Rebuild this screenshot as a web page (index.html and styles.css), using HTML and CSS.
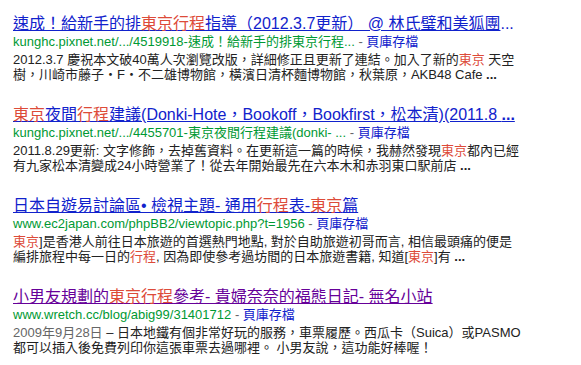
FILE: index.html
```html
<!DOCTYPE html>
<html lang="zh-Hant">

<head>
    <meta charset="UTF-8">
    <title>東京行程 - 搜尋結果</title>
    <link rel="stylesheet" href="styles.css">
</head>

<body>
    <ol class="results">
        <li class="result">
            <h3 class="title"><a href="#">速成！給新手的排<em>東京行程</em>指導（2012.3.7更新） @ 林氏璧和美狐團</a>...</h3>
            <div class="url">
                <cite>kunghc.pixnet.net/.../4519918-速成！給新手的排東京行程...</cite>
                <span class="sep">-</span> <a href="#" class="cache">頁庫存檔</a>
            </div>
            <p class="snippet">2012.3.7 慶祝本文破40萬人次瀏覽改版，詳細修正且更新了連結。加入了新的<em>東京</em> 天空<br>樹，川崎市藤子・F・不二雄博物館，橫濱日清杯麵博物館，秋葉原，AKB48 Cafe <b>...</b></p>
        </li>
        <li class="result">
            <h3 class="title"><a href="#"><em>東京</em>夜間<em>行程</em>建議(Donki-Hote，Bookoff，Bookfirst，松本清)(2011.8 <b>...</b></a></h3>
            <div class="url">
                <cite>kunghc.pixnet.net/.../4455701-東京夜間行程建議(donki- ...</cite>
                <span class="sep">-</span> <a href="#" class="cache">頁庫存檔</a>
            </div>
            <p class="snippet">2011.8.29更新: 文字修飾，去掉舊資料。在更新這一篇的時候，我赫然發現<em>東京</em>都內已經<br>有九家松本清變成24小時營業了！從去年開始最先在六本木和赤羽東口駅前店 <b>...</b></p>
        </li>
        <li class="result">
            <h3 class="title"><a href="#">日本自遊易討論區• 檢視主題- 通用<em>行程</em>表-<em>東京</em>篇</a></h3>
            <div class="url">
                <cite>www.ec2japan.com/phpBB2/viewtopic.php?t=1956</cite>
                <span class="sep">-</span> <a href="#" class="cache">頁庫存檔</a>
            </div>
            <p class="snippet"><em>東京</em>]是香港人前往日本旅遊的首選熱門地點, 對於自助旅遊初哥而言, 相信最頭痛的便是<br>編排旅程中每一日的<em>行程</em>, 因為即使參考過坊間的日本旅遊書籍, 知道[<em>東京</em>]有 <b>...</b></p>
        </li>
        <li class="result">
            <h3 class="title"><a href="#" class="visited">小男友規劃的<em>東京行程</em>參考- 貴婦奈奈的福態日記- 無名小站</a></h3>
            <div class="url">
                <cite>www.wretch.cc/blog/abig99/31401712</cite>
                <span class="sep">-</span> <a href="#" class="cache">頁庫存檔</a>
            </div>
            <p class="snippet"><span class="date">2009年9月28日</span> – 日本地鐵有個非常好玩的服務，車票履歷。西瓜卡（Suica）或PASMO<br>都可以插入後免費列印你這張車票去過哪裡。 小男友說，這功能好棒喔！</p>
        </li>
    </ol>
</body>

</html>
```

FILE: styles.css
```css
* {
    box-sizing: border-box;
}

body {
    margin: 0;
    background: #fff;
    font-family: "Liberation Sans", "Noto Sans CJK TC", sans-serif;
    color: #222;
}

.results {
    list-style: none;
    margin: 0;
    padding: 14px 0 0 13px;
}

.result {
    margin-bottom: 23px;
}

.result .title {
    margin: 0;
    font-size: 16px;
    font-weight: normal;
    line-height: 19px;
    white-space: nowrap;
    color: #1122cc;
}

.result .title a {
    color: #1122cc;
    text-decoration: underline;
}

.result .title a.visited {
    color: #660099;
}

.result em {
    font-style: normal;
    color: #dd4b39;
}

.result .url {
    margin-top: 1px;
    font-size: 13px;
    line-height: 16px;
    white-space: nowrap;
}

.result .url cite {
    font-style: normal;
    color: #009933;
}

.result .url .sep {
    color: #666;
}

.result .url .cache {
    color: #1122cc;
    text-decoration: none;
}

.result .snippet {
    margin: 2px 0 0;
    font-size: 13px;
    line-height: 15px;
    color: #222;
    white-space: nowrap;
}

.result .snippet b {
    font-weight: bold;
}

.result .snippet .date {
    color: #666;
}
```
